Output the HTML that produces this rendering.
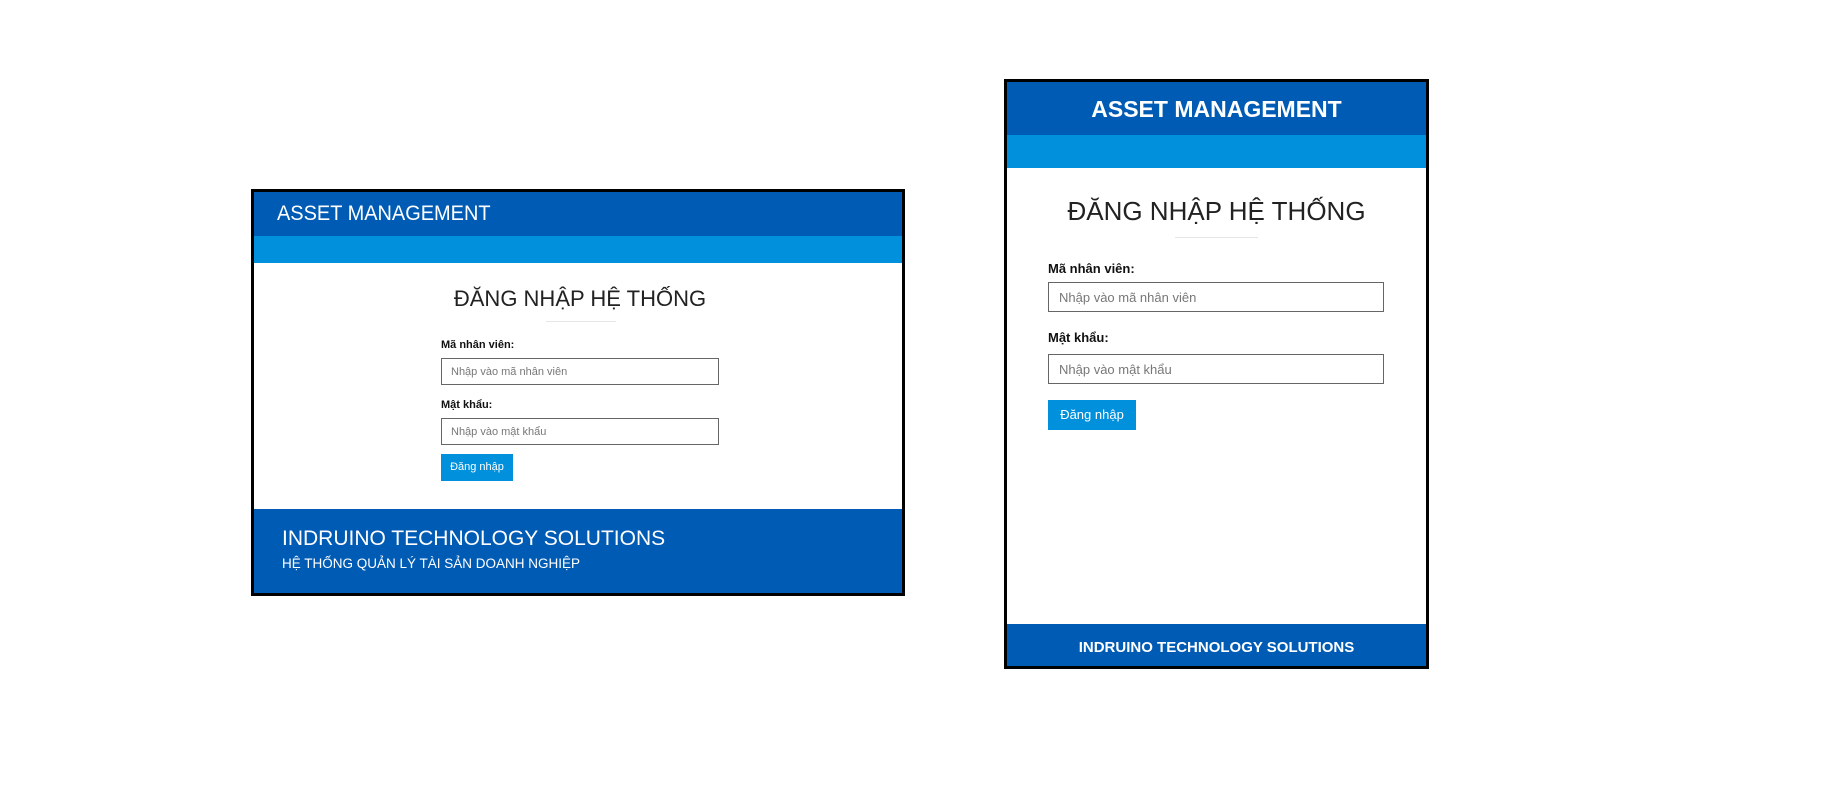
<!DOCTYPE html>
<html><head><meta charset="utf-8"><style>
*{margin:0;padding:0;box-sizing:border-box}
body{width:1848px;height:800px;background:#fff;position:relative;font-family:"Liberation Sans","DejaVu Sans",sans-serif;overflow:hidden}
.a{position:absolute}
.box{position:absolute;border:3px solid #000;background:#fff;overflow:hidden}
.dk{background:#005bb5}
.lt{background:#0090dc}
.t{color:#fff;font-weight:bold;white-space:nowrap}
.h{color:#222;white-space:nowrap;text-align:center}
.lbl{font-weight:bold;color:#111;white-space:nowrap}
.in{border:1px solid #666;background:#fff;color:#777;white-space:nowrap}
.btn{background:#0090dc;color:#fff;white-space:nowrap;text-align:center}
.dv{background:#e6e6e6;height:1px}
</style></head><body>

<div class="box" style="left:251px;top:189px;width:654px;height:407px">
  <div class="a dk" style="left:0;top:0;width:648px;height:44px"></div>
  <div class="a t" style="left:23px;top:10px;font-size:21px;font-weight:normal;transform:scaleX(0.95);transform-origin:left">ASSET MANAGEMENT</div>
  <div class="a lt" style="left:0;top:44px;width:648px;height:27px"></div>
  <div class="a h" style="left:0;top:94px;width:652px;font-size:22px">ĐĂNG NHẬP HỆ THỐNG</div>
  <div class="a dv" style="left:292px;top:129px;width:70px"></div>
  <div class="a lbl" style="left:187px;top:147px;font-size:11px">Mã nhân viên:</div>
  <div class="a in" style="left:187px;top:166px;width:278px;height:27px;font-size:11px;padding:7px 9px">Nhập vào mã nhân viên</div>
  <div class="a lbl" style="left:187px;top:207px;font-size:11px">Mật khẩu:</div>
  <div class="a in" style="left:187px;top:226px;width:278px;height:27px;font-size:11px;padding:7px 9px">Nhập vào mật khẩu</div>
  <div class="a btn" style="left:187px;top:262px;width:72px;height:27px;font-size:11px;line-height:27px">Đăng nhập</div>
  <div class="a dk" style="left:0;top:317px;width:648px;height:87px"></div>
  <div class="a t" style="left:28px;top:335px;font-size:21px;font-weight:normal">INDRUINO TECHNOLOGY SOLUTIONS</div>
  <div class="a t" style="left:28px;top:364px;font-size:13.5px;font-weight:normal">HỆ THỐNG QUẢN LÝ TÀI SẢN DOANH NGHIỆP</div>
</div>

<div class="box" style="left:1004px;top:79px;width:425px;height:590px">
  <div class="a dk" style="left:0;top:0;width:419px;height:53px"></div>
  <div class="a t" style="left:0;top:14px;width:419px;text-align:center;font-size:23px">ASSET MANAGEMENT</div>
  <div class="a lt" style="left:0;top:53px;width:419px;height:33px"></div>
  <div class="a h" style="left:0;top:114px;width:419px;font-size:26px">ĐĂNG NHẬP HỆ THỐNG</div>
  <div class="a dv" style="left:168px;top:155px;width:83px"></div>
  <div class="a lbl" style="left:41px;top:179px;font-size:13px">Mã nhân viên:</div>
  <div class="a in" style="left:41px;top:200px;width:336px;height:30px;font-size:13px;padding:7px 10px">Nhập vào mã nhân viên</div>
  <div class="a lbl" style="left:41px;top:248px;font-size:13px">Mật khẩu:</div>
  <div class="a in" style="left:41px;top:272px;width:336px;height:30px;font-size:13px;padding:7px 10px">Nhập vào mật khẩu</div>
  <div class="a btn" style="left:41px;top:318px;width:88px;height:30px;font-size:13px;line-height:30px">Đăng nhập</div>
  <div class="a dk" style="left:0;top:542px;width:419px;height:48px"></div>
  <div class="a t" style="left:0;top:557px;width:419px;text-align:center;font-size:15px">INDRUINO TECHNOLOGY SOLUTIONS</div>
</div>
</body></html>
